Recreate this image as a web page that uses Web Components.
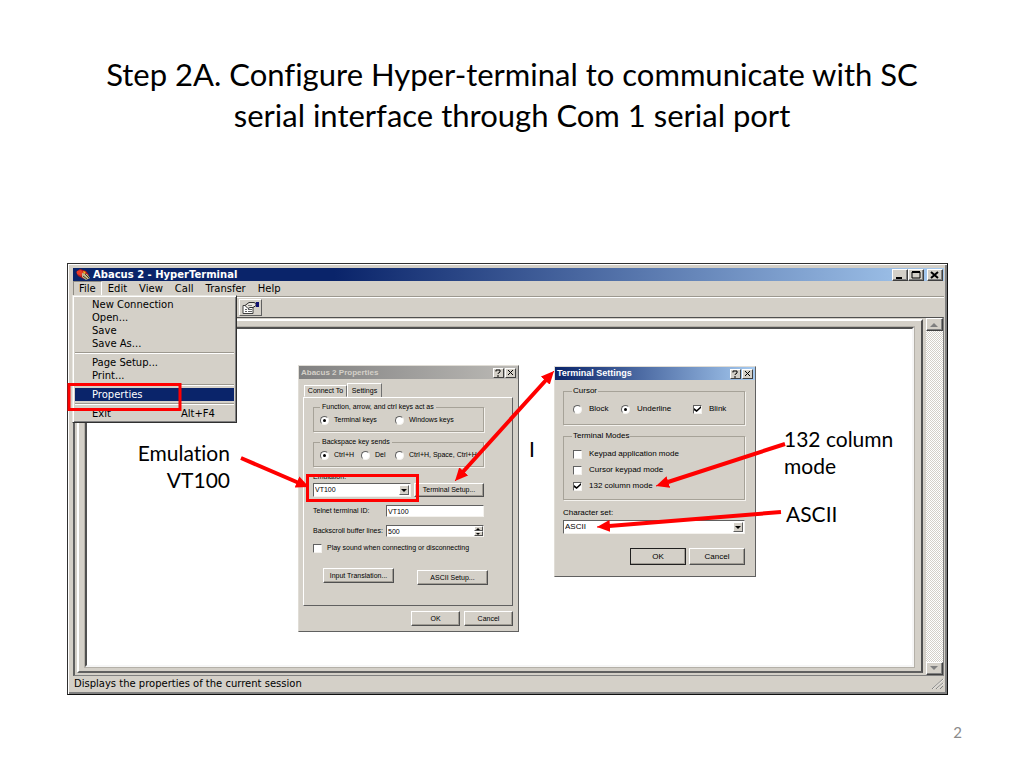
<!DOCTYPE html>
<html lang="en">
<head>
<meta charset="utf-8">
<title>Step 2A. Configure Hyper-terminal</title>
<style>
  html, body { margin: 0; background: #fff; }
  body { font-family: Lato, "Liberation Sans", sans-serif; color: #000; font-variant-ligatures: none; }
</style>
</head>
<body>
<slide-page>
  <span slot="title">Step 2A. Configure Hyper-terminal to communicate with SC<br>serial interface through Com 1 serial port</span>
  <terminal-window></terminal-window>
  <properties-dialog></properties-dialog>
  <settings-dialog></settings-dialog>
  <slide-note style="--left:37px;--top:176px;--width:126px;--align:right">Emulation<br>VT100</slide-note>
  <slide-note style="--left:462px;--top:172px">I</slide-note>
  <slide-note style="--left:717px;--top:162px">132 column<br>mode</slide-note>
  <slide-note style="--left:719px;--top:237px">ASCII</slide-note>
  <callout-layer></callout-layer>
  <span slot="number">2</span>
</slide-page>

<script>
const define = (name, html) => {
  const template = document.createElement('template');
  template.innerHTML = html;
  customElements.define(name, class extends HTMLElement {
    constructor() {
      super();
      this.attachShadow({ mode: 'open' }).append(template.content.cloneNode(true));
      const heading = this.shadowRoot.querySelector('[data-heading]');
      if (heading) heading.textContent = this.getAttribute('heading');
    }
  });
};

/* Classic grey controls shared by the two dialogs */
const controls = `
  * { box-sizing: border-box; }
  button, input, select, label, legend { font: inherit; color: inherit; margin: 0; }
  button { background: #d4d0c8; border: 1px solid; border-color: #fff #505050 #505050 #fff;
    box-shadow: inset -1px -1px #a09c94; padding: 0; text-align: center; white-space: nowrap; }
  fieldset { margin: 0; min-width: 0; padding: 0 0 0 6px; border: 1px solid #a6a298; box-shadow: 1px 1px #f4f2ee; }
  legend { padding: 0 2px; line-height: 10px; }
  label { white-space: nowrap; }
  label.opt { display: flex; align-items: center; gap: 5px; }
  input[type=radio], input[type=checkbox] { appearance: none; flex: none; width: 9px; height: 9px; background: #fff;
    border: 1px solid; border-color: #606060 #f4f2ee #f4f2ee #606060; display: grid; place-items: center; }
  input[type=radio] { border-radius: 50%; }
  input[type=radio]:checked::before { content: ""; width: 3px; height: 3px; border-radius: 50%; background: #000; }
  input[type=checkbox]:checked::before { content: ""; width: 7px; height: 6px; background: #000;
    clip-path: polygon(0 35%, 38% 65%, 100% 0, 100% 35%, 38% 100%, 0 70%); }
  input[type=text] { width: 100%; min-width: 0; padding: 0 1px; background: #fff; border: 1px solid;
    border-color: #606060 #f4f2ee #f4f2ee #606060; border-radius: 0; height: 12px; }
  .field { display: grid; align-items: stretch; }
  .field > * { grid-area: 1 / 1; }
  select { appearance: none; width: 100%; height: 14px; padding: 0 12px 0 1px; border-radius: 0; background: #fff;
    border: 1px solid; border-color: #606060 #f4f2ee #f4f2ee #606060; }
  .drop { justify-self: end; width: 10px; margin: 2px; background: #d4d0c8; border: 1px solid; border-color: #fff #606060 #606060 #fff;
    display: grid; place-items: center; pointer-events: none; }
  .drop::before { content: ""; border: 3px solid transparent; border-top-color: #000; border-bottom: 0; }
`;

define('slide-page', `
  <style>
    :host { display: flex; flex-direction: column; min-height: 100vh; box-sizing: border-box; padding: 54px 62px 20px 67px; }
    h1 { margin: 0 0 126px; padding-right: 5px; font-size: 31px; line-height: 41px; font-weight: 400; text-align: center; min-height: 83px; white-space: nowrap; }
    main { position: relative; margin-right: 14px; }
    footer { margin-top: auto; height: 32px; line-height: 32px; text-align: right; font-size: 15px; color: #8b8b8b; }
  </style>
  <h1><slot name="title"></slot></h1>
  <main><slot></slot></main>
  <footer><slot name="number"></slot></footer>
`);

define('slide-note', `
  <style>
    :host { display: block; position: absolute; left: var(--left); top: var(--top); width: var(--width, auto);
      text-align: var(--align, left); font-size: 21px; line-height: 27px; white-space: nowrap; }
  </style>
  <slot></slot>
`);

define('terminal-window', `
  <style>
    * { box-sizing: border-box; }
    :host { display: block; box-sizing: border-box; background: #d4d0c8; border: 1px solid; border-color: #303030 #101010 #101010 #303030;
      box-shadow: inset 1px 1px #fff, inset -2px -2px #808080; padding: 4px 3px 2px 5px;
      font-family: "DejaVu Sans", sans-serif; font-size: 10px; }
    button { font: inherit; color: inherit; background: #d4d0c8; margin: 0; padding: 0; border: 0; white-space: nowrap; }
    header { display: flex; align-items: center; height: 13px; background: linear-gradient(90deg, #0a246a 30%, #a6caf0); color: #fff; gap: 2px; padding-left: 2px; }
    h2 { flex: 1; margin: 0; font-size: 10px; line-height: 13px; font-weight: 700; }
    .box { width: 16px; height: 12px; border: 1px solid; border-color: #fff #404040 #404040 #fff; box-shadow: inset -1px -1px #808080; display: grid; place-items: center; }
    .sys { display: flex; padding-right: 1px; }
    .sys .box:last-child { margin-left: 3px; }
    nav { display: flex; height: 16px; border-bottom: 1px solid #9c988f; }
    nav button { padding: 0 6px; }
    nav button:first-child { border: 1px solid; border-color: #908c84 #fff #fff #908c84; padding: 0 5px; }
    .tools { height: 20px; border-top: 1px solid #fff; padding: 1px 0 0 166px; }
    .tools button { width: 23px; height: 17px; border: 1px solid; border-color: #fff #606060 #606060 #fff; display: grid; place-items: center; }
    .body { display: flex; border: 1px solid #808080; border-left: 2px solid #606060; border-top-color: #505050; height: 359px; padding-left: 2px; }
    .frame { flex: 1; border: 2px solid; border-color: #fff #505050 #606060 #fff; padding: 6px 7px 4px 6px; margin: 1px 0 2px; }
    .page { height: 100%; background: #fff; border: 2px solid; border-color: #505050 #f6f6f6 #f6f6f6 #505050; outline: 1px solid #b4b0a8; }
    .scroll { width: 17px; margin: 0 0 0 3px; display: flex; flex-direction: column; justify-content: space-between;
      background: repeating-conic-gradient(#fff 0 25%, #d4d0c8 0 50%) 0 0 / 2px 2px; }
    .scroll .box { width: 17px; height: 13px; }
    footer { display: flex; justify-content: space-between; height: 16px; line-height: 16px; padding-left: 1px; }
    .menu { position: absolute; left: 5px; top: 32px; width: 165px; height: 128px; background: #d4d0c8; padding: 2px;
      border: 1px solid; border-color: #e8e6e0 #303030 #303030 #e8e6e0; box-shadow: inset 1px 1px #fff, inset -1px -1px #808080; }
    .menu button { display: flex; justify-content: space-between; width: 100%; height: 13px; line-height: 13px; padding: 0 19px 0 17px; text-align: left; }
    .menu button.on { background: #0a246a; color: #fff; }
    hr { margin: 2px 0; border: 0; border-top: 1px solid #9c988f; border-bottom: 1px solid #fff; height: 2px; }
  </style>
  <header>
    <svg width="16" height="13" viewBox="0 0 16 13" aria-hidden="true">
      <path d="M1 4 5 1l6 2 3 4-5 4-6-3z" fill="#b01818"/><path d="M2 3 6 2l3 3-3 3-4-2z" fill="#e83c28"/>
      <path d="M7 5l5 1 3 4-4 2-4-3z" fill="#c0b898"/><path d="M8 8l4 3M10 6l4 4" stroke="#504010" fill="none"/><path d="M8 3l3 1-2 2z" fill="#f0c020"/>
    </svg>
    <h2>Abacus 2 - HyperTerminal</h2>
    <div class="sys">
      <button class="box" aria-label="Minimize"><svg width="10" height="8"><path d="M1 7h6" stroke="#000" stroke-width="2"/></svg></button>
      <button class="box" aria-label="Maximize"><svg width="10" height="8"><path d="M1 1h8v6H1z" stroke="#000" fill="none"/><path d="M1 1h8" stroke="#000" stroke-width="2"/></svg></button>
      <button class="box" aria-label="Close"><svg width="10" height="8"><path d="M1 1l7 6M8 1L1 7" stroke="#000" stroke-width="2"/></svg></button>
    </div>
  </header>
  <nav><button>File</button><button>Edit</button><button>View</button><button>Call</button><button>Transfer</button><button>Help</button></nav>
  <div class="tools"><button aria-label="Properties"><svg width="18" height="13" viewBox="0 0 18 13">
    <path d="M1 4.500h10v8H1z" fill="#fff" stroke="#404040"/><path d="M3 8.500h2M6 8.500h4M3 10.500h2M6 10.500h4" stroke="#606060"/>
    <path d="M3 4.500l4-3h5l2 1v2l-3 2H8l-2 1z" fill="#e8e4dc" stroke="#303030"/><path d="M6 4.500h4" stroke="#808080"/><path d="M14 1h3v5h-3z" fill="#101070"/></svg></button></div>
  <div class="body">
    <div class="frame"><div class="page"></div></div>
    <div class="scroll">
      <button class="box" aria-label="Scroll up"><svg width="9" height="5"><path d="M0 5l4-4 4 4z" fill="#808080"/></svg></button>
      <button class="box" aria-label="Scroll down"><svg width="9" height="5"><path d="M0 0l4 4 4-4z" fill="#808080"/></svg></button>
    </div>
  </div>
  <footer><span>Displays the properties of the current session</span>
    <svg width="13" height="13"><path d="M1 13L12 3M5 13l7-6M9 13l3-3" stroke="#808080"/><path d="M2 13L13 3M6 13l7-6" stroke="#fff" opacity=".6"/></svg></footer>
  <div class="menu" role="menu">
    <button role="menuitem">New Connection</button><button role="menuitem">Open...</button><button role="menuitem">Save</button><button role="menuitem">Save As...</button>
    <hr><button role="menuitem">Page Setup...</button><button role="menuitem">Print...</button>
    <hr><button role="menuitem" class="on">Properties</button>
    <hr><button role="menuitem"><span>Exit</span><span>Alt+F4</span></button>
  </div>
`);

define('win-dialog', `
  <style>
    * { box-sizing: border-box; }
    :host { display: block; box-sizing: border-box; background: #d4d0c8; border: 1px solid; border-color: #e0ddd6 #606060 #606060 #e0ddd6; }
    header { display: flex; align-items: center; height: 13px; padding: 0 2px 0 2px; background: var(--bar); color: var(--bar-text); gap: 1px; }
    h3 { flex: 1; margin: 0; font: 700 var(--bar-size)/13px "Liberation Sans", sans-serif; white-space: nowrap; }
    button { width: 11px; height: 10px; padding: 0; color: #000; background: #d4d0c8; border: 1px solid; border-color: #fff #404040 #404040 #fff; display: grid; place-items: center; }
  </style>
  <header><h3 data-heading></h3>
    <button aria-label="Help"><svg width="7" height="8"><path d="M1 2.500V1h4v2L3 4.500V5M3 6v2" fill="none" stroke="#000"/></svg></button>
    <button aria-label="Close"><svg width="7" height="7"><path d="M1 1l5 5M6 1L1 6" stroke="#000"/></svg></button></header>
  <slot></slot>
`);

define('properties-dialog', `
  <style>
    ${controls}
    :host { display: block; position: absolute; left: 231px; top: 102px; width: 221px; font: 7px/10px "Liberation Sans", sans-serif; }
    win-dialog { --bar: linear-gradient(90deg, #808080, #bcbab6); --bar-text: #d4d0c8; --bar-size: 8px; height: 267px; }
    .tabs { display: flex; align-items: end; padding: 4px 5px 0; height: 18px; }
    .tabs button { height: 12px; width: 43px; border-color: #fff #707070 transparent #fff; box-shadow: none; }
    .tabs button.on { height: 14px; width: 35px; border-bottom: 0; }
    .panel { margin: 0 5px 0 4px; height: 209px; padding: 4px 28px 0 9px; border: 1px solid; border-color: #fff #606060 #606060 #fff; display: flex; flex-direction: column; }
    fieldset { height: 30px; margin-bottom: 5px; }
    .three { display: grid; grid-template-columns: 41px 34px auto; padding-top: 3px; }
    .two { display: grid; grid-template-columns: 75px auto; padding-top: 3px; }
    .emu { display: grid; grid-template-columns: 98px 70px; gap: 0 3px; margin-bottom: 8px; }
    .emu > label { grid-column: 1 / 3; height: 11px; }
    .line { display: grid; grid-template-columns: 73px 1fr; align-items: center; margin-bottom: 8px; }
    .spin { justify-self: end; width: 9px; display: grid; margin: 1px; }
    .spin button { height: 5px; box-shadow: none; display: grid; place-items: center; }
    .panel > label.opt { margin-top: -2px; }
    .acts { display: flex; gap: 23px; margin: 15px -4px 0 10px; }
    .acts button { flex: none; width: 71px; height: 15px; }
    .acts button + button { margin-top: 2px; }
    .foot { display: flex; justify-content: end; gap: 4px; padding: 5px 5px 0; }
    .foot button { width: 49px; height: 15px; }
  </style>
  <win-dialog heading="Abacus 2 Properties">
    <div class="tabs"><button>Connect To</button><button class="on">Settings</button></div>
    <div class="panel">
      <fieldset><legend>Function, arrow, and ctrl keys act as</legend><div class="two">
        <label class="opt"><input type="radio" name="keys" checked>Terminal keys</label><label class="opt"><input type="radio" name="keys">Windows keys</label></div></fieldset>
      <fieldset><legend>Backspace key sends</legend><div class="three">
        <label class="opt"><input type="radio" name="bs" checked>Ctrl+H</label><label class="opt"><input type="radio" name="bs">Del</label><label class="opt"><input type="radio" name="bs">Ctrl+H, Space, Ctrl+H</label></div></fieldset>
      <div class="emu"><label for="emu">Emulation:</label><div class="field"><select id="emu"><option>VT100</option></select><span class="drop"></span></div><button>Terminal Setup...</button></div>
      <div class="line"><label for="tid">Telnet terminal ID:</label><input type="text" id="tid" value="VT100"></div>
      <div class="line"><label for="buf">Backscroll buffer lines:</label><div class="field"><input type="text" id="buf" value="500"><span class="spin">
        <button aria-label="More"><svg width="5" height="2"><path d="M0 2l2-2 2 2z"/></svg></button><button aria-label="Less"><svg width="5" height="2"><path d="M0 0l2 2 2-2z"/></svg></button></span></div></div>
      <label class="opt"><input type="checkbox">Play sound when connecting or disconnecting</label>
      <div class="acts"><button>Input Translation...</button><button>ASCII Setup...</button></div>
    </div>
    <div class="foot"><button>OK</button><button>Cancel</button></div>
  </win-dialog>
`);

define('settings-dialog', `
  <style>
    ${controls}
    :host { display: block; position: absolute; left: 487px; top: 103px; width: 202px; font: 8px/10px "Liberation Sans", sans-serif; }
    win-dialog { --bar: linear-gradient(90deg, #0a246a, #a6caf0); --bar-text: #fff; --bar-size: 9px; height: 211px; }
    .form { display: flex; flex-direction: column; padding: 6px 10px 0 8px; }
    fieldset { padding-left: 9px; margin-bottom: 6px; }
    legend { padding: 0 1px; margin-left: -1px; }
    .cursor { height: 39px; }
    .cursor div { display: grid; grid-template-columns: 48px 72px auto; padding-top: 8px; }
    .modes { height: 69px; margin-bottom: 8px; }
    .modes div { display: grid; gap: 6px; padding-top: 8px; }
    label.opt { gap: 7px; }
    .acts { display: flex; justify-content: end; gap: 3px; margin-top: 14px; }
    .acts button { width: 56px; height: 17px; }
    .acts button:first-child { border-color: #202020; }
    .field { margin-top: 2px; }
  </style>
  <win-dialog heading="Terminal Settings">
    <div class="form">
      <fieldset class="cursor"><legend>Cursor</legend><div>
        <label class="opt"><input type="radio" name="c">Block</label><label class="opt"><input type="radio" name="c" checked>Underline</label><label class="opt"><input type="checkbox" checked>Blink</label></div></fieldset>
      <fieldset class="modes"><legend>Terminal Modes</legend><div>
        <label class="opt"><input type="checkbox">Keypad application mode</label>
        <label class="opt"><input type="checkbox">Cursor keypad mode</label>
        <label class="opt"><input type="checkbox" checked>132 column mode</label></div></fieldset>
      <label for="cs">Character set:</label>
      <div class="field"><select id="cs"><option>ASCII</option></select><span class="drop"></span></div>
      <div class="acts"><button>OK</button><button>Cancel</button></div>
    </div>
  </win-dialog>
`);

define('callout-layer', `
  <style>
    :host { display: block; position: absolute; inset: 0; pointer-events: none; }
    svg { display: block; overflow: visible; }
  </style>
  <svg width="881" height="432" viewBox="67 263 881 432" fill="none" stroke="#f00" stroke-width="4" aria-hidden="true">
    <defs><marker id="tip" viewBox="0 0 13 12" refX="13" refY="6" markerWidth="13" markerHeight="12" markerUnits="userSpaceOnUse" orient="auto-start-reverse"><path d="M0 0l13 6-13 6z" fill="#f00" stroke="none"/></marker></defs>
    <path d="M69 384.500h111v25H69zM307.500 475.500h110v25h-110z" stroke-width="3"/>
    <path d="M241 458L299 483M547 379L461 474M785 444L668 482M781 512L609 526"/>
    <g stroke-width="1"><path d="M241 458L309 487" marker-end="url(#tip)"/><path d="M785 444L656 486" marker-end="url(#tip)"/><path d="M781 512L597 527" marker-end="url(#tip)"/><path d="M455 481L554 371" marker-start="url(#tip)" marker-end="url(#tip)"/></g>
  </svg>
`);
</script>
</body>
</html>
